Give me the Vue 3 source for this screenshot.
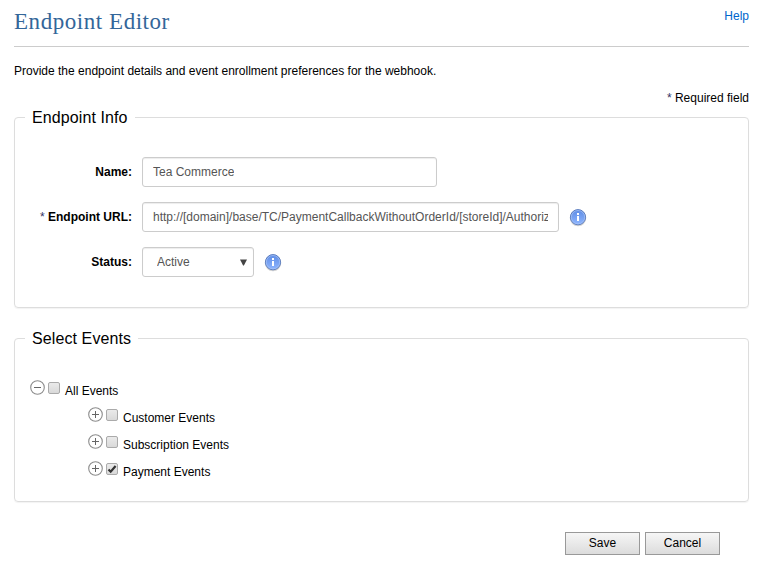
<script setup>
import { ref } from 'vue'

const name = ref('Tea Commerce')
const url = ref('http://[domain]/base/TC/PaymentCallbackWithoutOrderId/[storeId]/Authorize')
const events = ref([
  { label: 'All Events', root: true, checked: false },
  { label: 'Customer Events', root: false, checked: false },
  { label: 'Subscription Events', root: false, checked: false },
  { label: 'Payment Events', root: false, checked: true },
])
</script>

<template>
  <main class="page">
    <header class="header">
      <h1>Endpoint Editor</h1>
      <a class="help">Help</a>
    </header>
    <p class="intro">Provide the endpoint details and event enrollment preferences for the webhook.</p>
    <p class="required"><span class="star">*</span> Required field</p>

    <fieldset class="info">
      <legend>Endpoint Info</legend>
      <div class="row">
        <label>Name:</label>
        <div class="field name"><span>{{ name }}</span></div>
      </div>
      <div class="row">
        <label><span class="star">*</span> Endpoint URL:</label>
        <div class="field url"><span>{{ url }}</span></div>
        <svg class="tip" viewBox="0 0 18 19">
          <defs>
            <linearGradient id="ball" x1="0" y1="0" x2="0" y2="1">
              <stop offset="0" stop-color="#5d8be4" />
              <stop offset="1" stop-color="#8fb6ff" />
            </linearGradient>
          </defs>
          <circle cx="9" cy="10.1" r="8.2" fill="#777" opacity=".32" />
          <circle cx="9" cy="9.2" r="7.6" fill="url(#ball)" stroke="#5576b8" stroke-width=".9" />
          <circle cx="9" cy="9.2" r="6.7" fill="none" stroke="#a9c4f6" stroke-width=".7" />
          <path d="M8 5h2v2H8zM8 8h2v5H8z" fill="#fff" />
        </svg>
      </div>
      <div class="row">
        <label>Status:</label>
        <div class="field status">
          <span>Active</span>
          <svg class="arrow" viewBox="0 0 7 7"><path d="M0 .5h7L3.9 6.5h-.8z" fill="#444" /></svg>
        </div>
        <svg class="tip" viewBox="0 0 18 19">
          <circle cx="9" cy="10.1" r="8.2" fill="#777" opacity=".32" />
          <circle cx="9" cy="9.2" r="7.6" fill="url(#ball)" stroke="#5576b8" stroke-width=".9" />
          <circle cx="9" cy="9.2" r="6.7" fill="none" stroke="#a9c4f6" stroke-width=".7" />
          <path d="M8 5h2v2H8zM8 8h2v5H8z" fill="#fff" />
        </svg>
      </div>
    </fieldset>

    <fieldset class="events">
      <legend>Select Events</legend>
      <div v-for="e in events" :key="e.label" class="node" :class="{ child: !e.root }">
        <svg class="toggle" viewBox="0 0 15 15">
          <circle cx="7.5" cy="7.5" r="6.8" fill="#fff" stroke="#8c8c8c" stroke-width="1.1" />
          <path :d="e.root ? 'M4 7.5h7' : 'M4 7.5h7M7.5 4v7'" stroke="#666" stroke-width="1" />
        </svg>
        <span class="box" @click="e.checked = !e.checked">
          <svg v-if="e.checked" viewBox="0 0 10 10">
            <path d="M1.5 5.4l2.2 2.3L8.6 2" fill="none" stroke="#333" stroke-width="2.2" />
          </svg>
        </span>
        <span class="text">{{ e.label }}</span>
      </div>
    </fieldset>

    <footer class="actions">
      <button>Save</button>
      <button>Cancel</button>
    </footer>
  </main>
</template>

<style>
body {
  margin: 0;
  background: #fff;
}
</style>

<style scoped>
.page {
  box-sizing: border-box;
  width: 757px;
  height: 566px;
  padding: 0 8px 0 14px;
  overflow: hidden;
  font-family: "Liberation Sans", Arial, sans-serif;
  font-size: 12px;
  line-height: 14px;
  color: #000;
}
.header {
  display: flex;
  justify-content: space-between;
  box-sizing: border-box;
  height: 47px;
  border-bottom: 1px solid #ccc;
}
h1 {
  margin: 8px 0 0;
  font-family: Georgia, "Liberation Serif", serif;
  font-weight: 400;
  font-size: 23px;
  line-height: 28px;
  letter-spacing: 0.55px;
  color: #336699;
}
.help {
  margin-top: 9px;
  color: #0066cc;
}
.intro {
  margin: 17px 0 0;
}
.required {
  margin: 13px 0 0;
  text-align: right;
}
.star {
  color: #336;
  font-weight: 400;
}
fieldset {
  box-sizing: border-box;
  margin: 0;
  padding: 0 10px;
  border: 1px solid #ddd;
  border-radius: 4px;
  box-shadow: 0 1px 1px rgba(0, 0, 0, 0.05);
}
legend {
  padding: 0 7px;
  font-size: 16px;
  line-height: 21px;
  letter-spacing: 0.1px;
}
.info {
  height: 201px;
  margin-top: 2px;
}
.events {
  height: 174px;
  margin-top: 20px;
}
.row {
  display: flex;
  align-items: center;
  height: 30px;
  margin-bottom: 15px;
}
legend + .row {
  margin-top: 29px;
}
label {
  width: 107px;
  margin-right: 10px;
  text-align: right;
  font-weight: 700;
}
.field {
  display: flex;
  align-items: center;
  justify-content: space-between;
  box-sizing: border-box;
  height: 30px;
  padding: 0 10px;
  border: 1px solid #ccc;
  border-radius: 3px;
  box-shadow: inset 0 1px 1px rgba(0, 0, 0, 0.075);
  color: #555;
  white-space: nowrap;
}
.field span {
  overflow: hidden;
}
.name {
  width: 295px;
}
.url {
  width: 417px;
}
.status {
  width: 112px;
  padding: 0 6px 0 14px;
}
.arrow {
  width: 7px;
  height: 7px;
}
.tip {
  width: 18px;
  height: 19px;
  margin-left: 10px;
}
.node {
  display: flex;
  align-items: center;
  height: 27px;
  padding-left: 5px;
}
legend + .node {
  margin-top: 25px;
}
.child {
  padding-left: 63px;
}
.toggle {
  width: 15px;
  height: 15px;
}
.box {
  display: flex;
  align-items: center;
  justify-content: center;
  box-sizing: border-box;
  width: 12px;
  height: 12px;
  margin: 1px 5px 0 3px;
  border: 1px solid #aaa;
  border-radius: 2px;
  background: linear-gradient(#eaeaea, #d9d9d9);
}
.box svg {
  width: 10px;
  height: 10px;
}
.text {
  padding-top: 6px;
}
.actions {
  display: flex;
  justify-content: flex-end;
  gap: 5px;
  margin-top: 30px;
  padding-right: 29px;
}
button {
  width: 75px;
  height: 23px;
  padding: 0 0 2px;
  border: 1px solid #999;
  border-radius: 0;
  background: linear-gradient(#f6f6f6, #dcdcdc);
  font: 12px/14px "Liberation Sans", Arial, sans-serif;
  color: #000;
}
</style>
